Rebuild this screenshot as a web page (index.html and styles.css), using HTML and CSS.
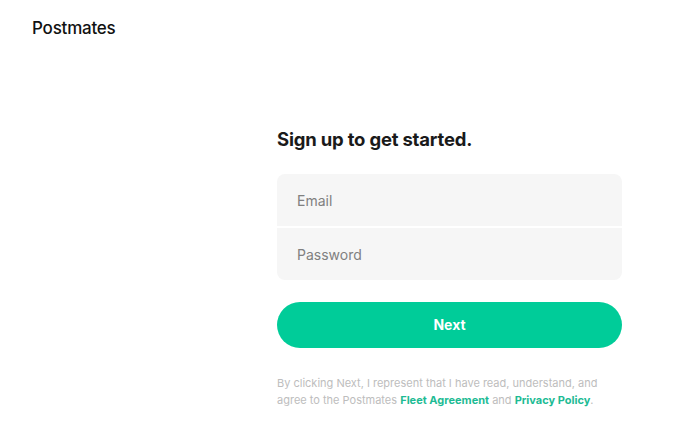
FILE: index.html
```html
<!DOCTYPE html>
<html lang="en">
<head>
<meta charset="utf-8">
<title>Postmates</title>
<link rel="stylesheet" href="styles.css">
</head>
<body>
<header class="top"><span class="logo">Postmates</span></header>
<main class="form">
  <h1 class="title">Sign up to get started.</h1>
  <div class="fields">
    <div class="field field-first">Email</div>
    <div class="field field-last">Password</div>
  </div>
  <button class="next">Next</button>
  <p class="legal">By clicking Next, I represent that I have read, understand, and agree to the Postmates <a class="link">Fleet Agreement</a> and <a class="link">Privacy Policy</a>.</p>
</main>
</body>
</html>
```
FILE: styles.css
```css
* { box-sizing: border-box; }
html, body { margin: 0; height: 100%; }
body { background: #fff; font-family: "Inter", "Liberation Sans", sans-serif; overflow: hidden; }
.top { padding: 18px 32px 0; height: 127px; }
.logo { font-family: "Inter", "Liberation Sans", sans-serif; font-weight: 500; font-size: 17px; line-height: 20px; letter-spacing: -0.22px; color: #111; display: block; }
.form { width: 345px; margin-left: 277px; }
.title { margin: 0 0 23px; font-size: 18.5px; line-height: 24px; font-weight: 700; color: #1a1a1a; letter-spacing: -0.2px; }
.fields { display: flex; flex-direction: column; gap: 2px; }
.field { height: 52px; background: #f6f6f6; padding-left: 20px; display: flex; align-items: center; font-size: 14px; color: #808080; }
.field-first { border-radius: 8px 8px 0 0; }
.field-last { border-radius: 0 0 8px 8px; }
.next { display: block; width: 100%; height: 46px; margin-top: 22px; padding: 0 0 2px; border: 0; border-radius: 23px; background: #00cc99; color: #fff; font: 700 14px "Inter", sans-serif; }
.legal { margin: 27px 0 0; font-size: 11px; line-height: 17px; color: #bdbdbd; width: 330px; }
.link { color: #1dbb94; font-weight: 700; }
```
